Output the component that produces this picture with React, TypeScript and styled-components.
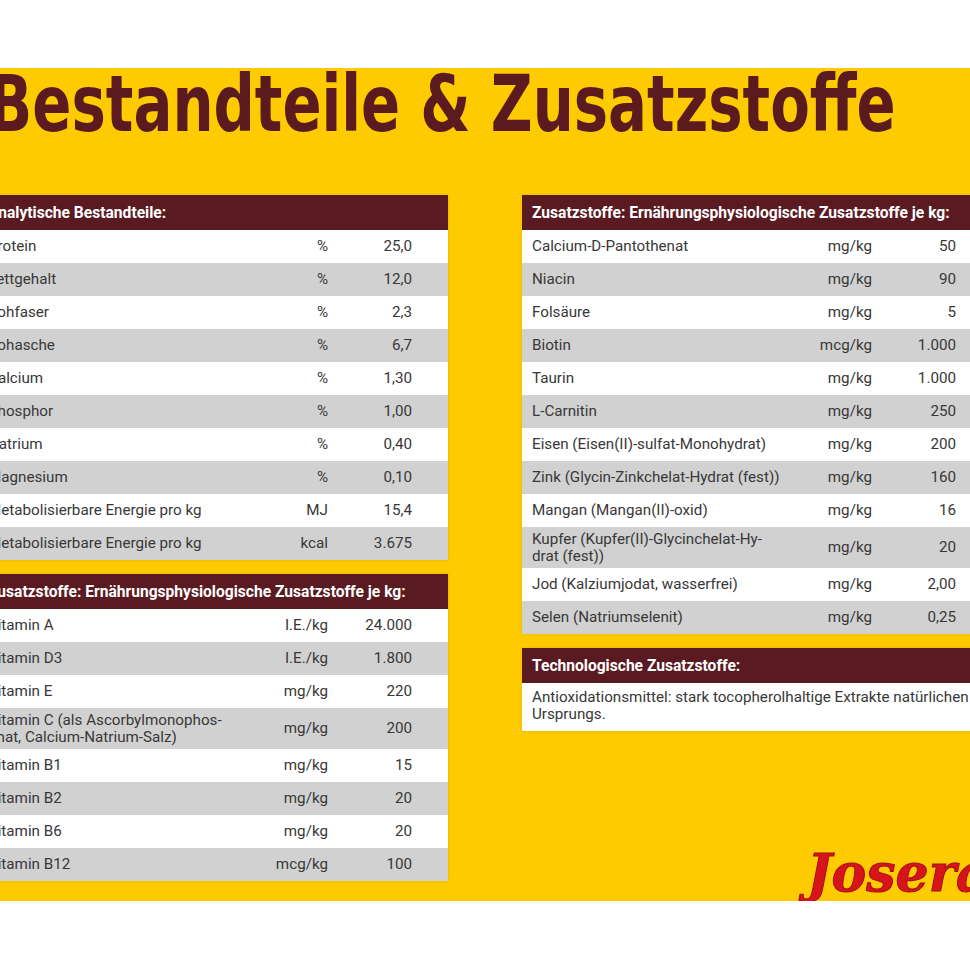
import styled, { createGlobalStyle } from 'styled-components';

const GlobalStyle = createGlobalStyle`
  html, body {
    margin: 0;
    padding: 0;
    background: #ffffff;
  }
  body {
    font-family: Roboto, "Liberation Sans", Arial, sans-serif;
  }
`;

const Page = styled.div`
  width: 970px;
  height: 971px;
  padding-top: 68px;
  box-sizing: border-box;
  overflow: hidden;
  background: #ffffff;
`;

const Panel = styled.section`
  height: 833px;
  background: #fecb00;
  overflow: hidden;
`;

const Inner = styled.div`
  margin-left: -22px;
  width: 1016px;
  height: 100%;
  display: flex;
  flex-direction: column;
`;

const Title = styled.h1`
  margin: 0;
  padding-left: 14px;
  height: 127px;
  font-family: "DejaVu Sans", sans-serif;
  font-weight: bold;
  font-size: 78px;
  line-height: 72px;
  color: #5a1a1e;
  white-space: nowrap;
  transform: scaleX(0.74);
  transform-origin: 0 0;
`;

const Columns = styled.div`
  flex: 1;
  display: grid;
  grid-template-columns: 470px 470px;
  column-gap: 74px;
  padding-bottom: 3px;
`;

const Column = styled.div`
  display: flex;
  flex-direction: column;
  gap: 14px;
`;

const Table = styled.div`
  display: flex;
  flex-direction: column;
  box-shadow: 0 0 3px rgba(0, 0, 0, 0.12);
`;

const Header = styled.div`
  height: 35px;
  display: flex;
  align-items: center;
  padding-left: 10px;
  background: #5a1a21;
  color: #ffffff;
  font-weight: 700;
  font-size: 15.6px;
  white-space: nowrap;
`;

const Row = styled.div<{ $shade?: boolean; $tall?: boolean }>`
  height: ${(p) => (p.$tall ? 41 : 33)}px;
  display: grid;
  grid-template-columns: 1fr 70px 84px;
  align-items: center;
  padding: 0 36px 0 10px;
  background: ${(p) => (p.$shade ? '#d1d1d1' : '#ffffff')};
  color: #383838;
  font-size: 15.2px;
  line-height: 16.5px;
`;

const Label = styled.span`
  white-space: nowrap;
`;

const Unit = styled.span`
  text-align: right;
`;

const Value = styled.span`
  text-align: right;
`;

const Note = styled.div`
  padding: 6px 10px 8px;
  background: #ffffff;
  color: #383838;
  font-size: 15.2px;
  line-height: 17px;
  white-space: nowrap;
`;

const Logo = styled.div`
  margin-top: auto;
  padding-left: 285px;
  height: 50px;
  font-family: "DejaVu Serif", serif;
  font-style: italic;
  font-weight: bold;
  font-size: 52px;
  line-height: 50px;
  color: #d8141b;
  -webkit-text-stroke: 1px #a50e14;
  white-space: nowrap;
`;

type Item = [string, string, string];

const analytic: Item[] = [
  ['Protein', '%', '25,0'],
  ['Fettgehalt', '%', '12,0'],
  ['Rohfaser', '%', '2,3'],
  ['Rohasche', '%', '6,7'],
  ['Calcium', '%', '1,30'],
  ['Phosphor', '%', '1,00'],
  ['Natrium', '%', '0,40'],
  ['Magnesium', '%', '0,10'],
  ['Metabolisierbare Energie pro kg', 'MJ', '15,4'],
  ['Metabolisierbare Energie pro kg', 'kcal', '3.675'],
];

const vitamins: Item[] = [
  ['Vitamin A', 'I.E./kg', '24.000'],
  ['Vitamin D3', 'I.E./kg', '1.800'],
  ['Vitamin E', 'mg/kg', '220'],
  ['Vitamin C (als Ascorbylmonophos-\nphat, Calcium-Natrium-Salz)', 'mg/kg', '200'],
  ['Vitamin B1', 'mg/kg', '15'],
  ['Vitamin B2', 'mg/kg', '20'],
  ['Vitamin B6', 'mg/kg', '20'],
  ['Vitamin B12', 'mcg/kg', '100'],
];

const minerals: Item[] = [
  ['Calcium-D-Pantothenat', 'mg/kg', '50'],
  ['Niacin', 'mg/kg', '90'],
  ['Folsäure', 'mg/kg', '5'],
  ['Biotin', 'mcg/kg', '1.000'],
  ['Taurin', 'mg/kg', '1.000'],
  ['L-Carnitin', 'mg/kg', '250'],
  ['Eisen (Eisen(II)-sulfat-Monohydrat)', 'mg/kg', '200'],
  ['Zink (Glycin-Zinkchelat-Hydrat (fest))', 'mg/kg', '160'],
  ['Mangan (Mangan(II)-oxid)', 'mg/kg', '16'],
  ['Kupfer (Kupfer(II)-Glycinchelat-Hy-\ndrat (fest))', 'mg/kg', '20'],
  ['Jod (Kalziumjodat, wasserfrei)', 'mg/kg', '2,00'],
  ['Selen (Natriumselenit)', 'mg/kg', '0,25'],
];

const DataTable = ({ title, items }: { title: string; items: Item[] }) => (
  <Table>
    <Header>{title}</Header>
    {items.map(([label, unit, value], i) => {
      const lines = label.split('\n');
      return (
        <Row key={label + unit} $shade={i % 2 === 1} $tall={lines.length > 1}>
          <Label>
            {lines.map((line, j) => (
              <span key={line}>
                {j > 0 && <br />}
                {line}
              </span>
            ))}
          </Label>
          <Unit>{unit}</Unit>
          <Value>{value}</Value>
        </Row>
      );
    })}
  </Table>
);

const additivesTitle = 'Zusatzstoffe: Ernährungsphysiologische Zusatzstoffe je kg:';

export default function App() {
  return (
    <>
      <GlobalStyle />
      <Page>
        <Panel>
          <Inner>
            <Title>Bestandteile &amp; Zusatzstoffe</Title>
            <Columns>
              <Column>
                <DataTable title="Analytische Bestandteile:" items={analytic} />
                <DataTable title={additivesTitle} items={vitamins} />
              </Column>
              <Column>
                <DataTable title={additivesTitle} items={minerals} />
                <Table>
                  <Header>Technologische Zusatzstoffe:</Header>
                  <Note>
                    Antioxidationsmittel: stark tocopherolhaltige Extrakte natürlichen
                    <br />
                    Ursprungs.
                  </Note>
                </Table>
                <Logo>Josera</Logo>
              </Column>
            </Columns>
          </Inner>
        </Panel>
      </Page>
    </>
  );
}
